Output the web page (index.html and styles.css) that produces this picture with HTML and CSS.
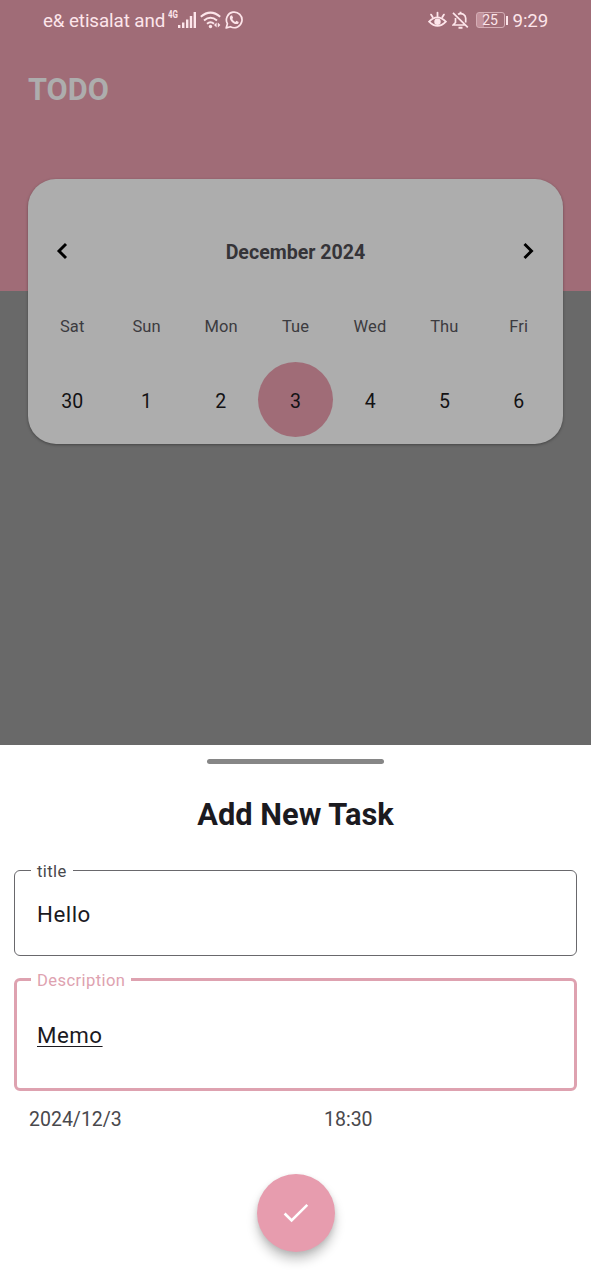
FILE: index.html
```html
<!DOCTYPE html>
<html lang="en">
<head>
<meta charset="utf-8">
<meta name="viewport" content="width=device-width, initial-scale=1">
<title>TODO</title>
<link rel="stylesheet" href="styles.css">
</head>
<body>
<div class="screen">
  <main class="home">
    <header class="header">
      <div class="status">
        <div class="status-left">
          <span class="carrier">e&amp; etisalat and</span>
          <span class="network">4G</span>
          <svg class="signal" width="19" height="18" viewBox="0 0 19 18" fill="currentColor"><path d="M0 14h2.400v3H0zM4 11.500h2.400V17H4zM8 8.500h2.400V17H8zM11.800 5h2.400v12h-2.400zM15.600 1H18v16h-2.400z"/></svg>
          <svg class="wifi" width="21" height="18" viewBox="0 0 21 18" fill="none" stroke="currentColor" stroke-width="2"><path d="M.8 5.700Q10.500-2.500 20.200 5.700M4 9.400q6.500-5.400 13 0M7 12.700q3.500-2.800 7 0"/><circle cx="10.500" cy="15.500" r="1.700" fill="currentColor" stroke="none"/><path d="M16.600 11.500v5l-2.600-2.500zM17.800 16.500v-5l2.600 2.500z" fill="currentColor" stroke="none"/></svg>
          <svg class="whatsapp" width="18" height="18" viewBox="0 0 18 18" fill="none" stroke="currentColor" stroke-width="1.700"><path d="M1.200 16.900l1.200-4.200a7.800 7.800 0 1 1 3 3z" stroke-linejoin="round"/><path d="M5.700 4.700l1.300-.4 1.100 2.500-.8 1.100c.7 1.500 1.700 2.400 3.100 3l1-1.100 2.300 1.100c0 1.600-1.200 2.300-2.500 2.200-3.100-.5-6.100-3.400-6.400-6.200-.1-.9.200-1.700.9-2.200z" fill="currentColor" stroke="none"/></svg>
        </div>
        <div class="status-right">
          <svg class="eye" width="19" height="18" viewBox="0 0 20 18" fill="none" stroke="currentColor" stroke-width="1.900"><path d="M1.200 10.700q8.500-9 17.600 0-8.800 9-17.600 0z"/><circle cx="10" cy="10.800" r="3.400" fill="currentColor" stroke="none"/><path d="M10 5V1.200M5 6.200L3.200 3.300M15 6.200L16.800 3.300" stroke-linecap="round"/></svg>
          <svg class="bell" width="17" height="18" viewBox="0 0 17 18" fill="none" stroke="currentColor" stroke-width="1.700"><path d="M1 1.800l14.800 14.500M3.500 7v4.500L1.200 14h11.500M6 3.300c4-2 7.700.7 7.700 4v4.300"/><path d="M6.500 16.800h4M8.500 3V.8" stroke-width="1.900"/></svg>
          <span class="battery"><span class="battery-level">25</span></span>
          <span class="clock">9:29</span>
        </div>
      </div>
      <h1 class="app-title">TODO</h1>
    </header>
    <section class="calendar">
      <div class="month">
        <svg class="arrow" width="12" height="18" viewBox="0 0 12 18" fill="none" stroke="currentColor" stroke-width="2.900"><path d="M10 2L3 9l7 7"/></svg>
        <h2 class="month-name">December 2024</h2>
        <svg class="arrow" width="12" height="18" viewBox="0 0 12 18" fill="none" stroke="currentColor" stroke-width="2.900"><path d="M1.500 2l7 7-7 7"/></svg>
      </div>
      <div class="week names"><span>Sat</span><span>Sun</span><span>Mon</span><span>Tue</span><span>Wed</span><span>Thu</span><span>Fri</span></div>
      <div class="week dates"><span>30</span><span>1</span><span>2</span><span class="selected">3</span><span>4</span><span>5</span><span>6</span></div>
    </section>
  </main>
  <section class="sheet">
    <div class="handle"></div>
    <h2 class="sheet-title">Add New Task</h2>
    <fieldset class="field field-title"><legend>title</legend><span>Hello</span></fieldset>
    <fieldset class="field field-description"><legend>Description</legend><span class="composing">Memo</span></fieldset>
    <div class="when"><span>2024/12/3</span><span>18:30</span></div>
    <button class="confirm" aria-label="Save task"><svg width="26" height="20" viewBox="0 0 26 20" fill="none" stroke="currentColor" stroke-width="2.600"><path d="M1.600 10.500l7 7L24.300 1.800"/></svg></button>
  </section>
</div>
</body>
</html>
```
FILE: styles.css
```css
* { box-sizing: border-box; }
body { margin: 0; font-family: Roboto, sans-serif; }
h1, h2 { margin: 0; }
svg { display: block; flex: none; }

.screen { display: flex; flex-direction: column; width: 591px; height: 1280px; }
.home { height: 745px; background: #696969; }
.header { height: 291px; background: #a06c77; }

.status { display: flex; justify-content: space-between; height: 40px; padding: 0 42px 0 43px; color: #fde5ea; }
.status-left, .status-right { display: flex; align-items: center; }
.carrier { width: 122px; padding-top: 2px; font-size: 18.800px; letter-spacing: -.1px; white-space: nowrap; }
.network { margin: -10px 0 0 3px; width: 10px; font-size: 11px; font-weight: 700; line-height: 12px; transform: scaleX(.72); transform-origin: left; }
.wifi { margin-left: 3px; }
.whatsapp { margin-left: 4px; }
.bell { margin-left: 5px; }
.battery { display: flex; width: 32px; margin-left: 7px; align-items: center; }
.battery::after { content: ""; width: 2px; height: 9px; margin-left: 1px; background: #fde5ea; }
.battery-level { width: 29px; height: 16px; border: 1px solid #d4adb5; border-radius: 3px; background: linear-gradient(to right, #c3929c 7px, transparent 7px); font-size: 14px; line-height: 15px; text-align: center; }
.clock { margin-left: 5px; padding: 2px 1px 0 0; font-size: 18.700px; letter-spacing: -.15px; }

.app-title { padding: 32px 28px 0; font-size: 30.700px; line-height: 36px; color: #adadad; }

.calendar { height: 265px; margin: -112px 28px 0; padding: 35px 7px 0; border-radius: 28px; background: #adadad; box-shadow: 0 1px 3px rgba(0, 0, 0, .35); }
.month { display: flex; align-items: center; justify-content: space-between; height: 74px; padding: 0 21px; }
.arrow { color: #000; }
.month-name { padding-top: 2px; font-size: 19.600px; color: #353438; }
.week { display: grid; grid-template-columns: repeat(7, 1fr); justify-items: center; align-items: center; }
.names { height: 74px; padding-top: 2px; font-size: 16.500px; letter-spacing: .1px; color: #3c3b3f; }
.dates { height: 75px; font-size: 19.500px; color: #131214; }
.dates span { padding-top: 3px; }
.selected { display: flex; align-items: center; justify-content: center; width: 75px; height: 75px; border-radius: 50%; background: #a06c77; }

.sheet { display: flex; flex-direction: column; align-items: center; height: 535px; padding: 14px 14px 0; background: #fff; }
.handle { width: 177px; height: 5px; border-radius: 3px; background: #868686; }
.sheet-title { margin-top: 33px; font-size: 30.800px; line-height: 36px; color: #1b1a1f; }
.field { display: flex; width: 563px; min-width: 0; margin: 0; padding: 0 22px; border: 1px solid #69686c; border-radius: 6px; font-size: 22.300px; letter-spacing: .5px; line-height: 28px; color: #1b1a1f; }
.field legend { margin-left: -6px; padding: 0 6px; font-size: 16.600px; letter-spacing: .4px; color: #49484c; }
.field-title { height: 96px; margin-top: 27px; padding-top: 19px; }
.field-title legend { height: 21px; line-height: 23px; }
.field-description { height: 123px; margin-top: 12px; padding: 31px 20px 0; border: 3px solid #dea2b0; }
.field-description legend { height: 22px; line-height: 25px; color: #dea2b0; }
.composing { text-decoration: underline; text-decoration-thickness: 1px; text-underline-offset: 3px; }
.when { display: grid; grid-template-columns: 1fr 1fr; width: 563px; height: 24px; margin-top: 18px; padding-left: 15px; font-size: 19.500px; letter-spacing: 0; line-height: 22px; color: #49484c; }
.when span + span { padding-left: 21px; }
.confirm { display: flex; align-items: center; justify-content: center; width: 78px; height: 78px; margin-top: 41px; padding: 0; border: 0; border-radius: 50%; background: #e79cae; color: #fff; box-shadow: 0 8px 11px rgba(0, 0, 0, .22), 0 2px 5px rgba(0, 0, 0, .1); }
```
